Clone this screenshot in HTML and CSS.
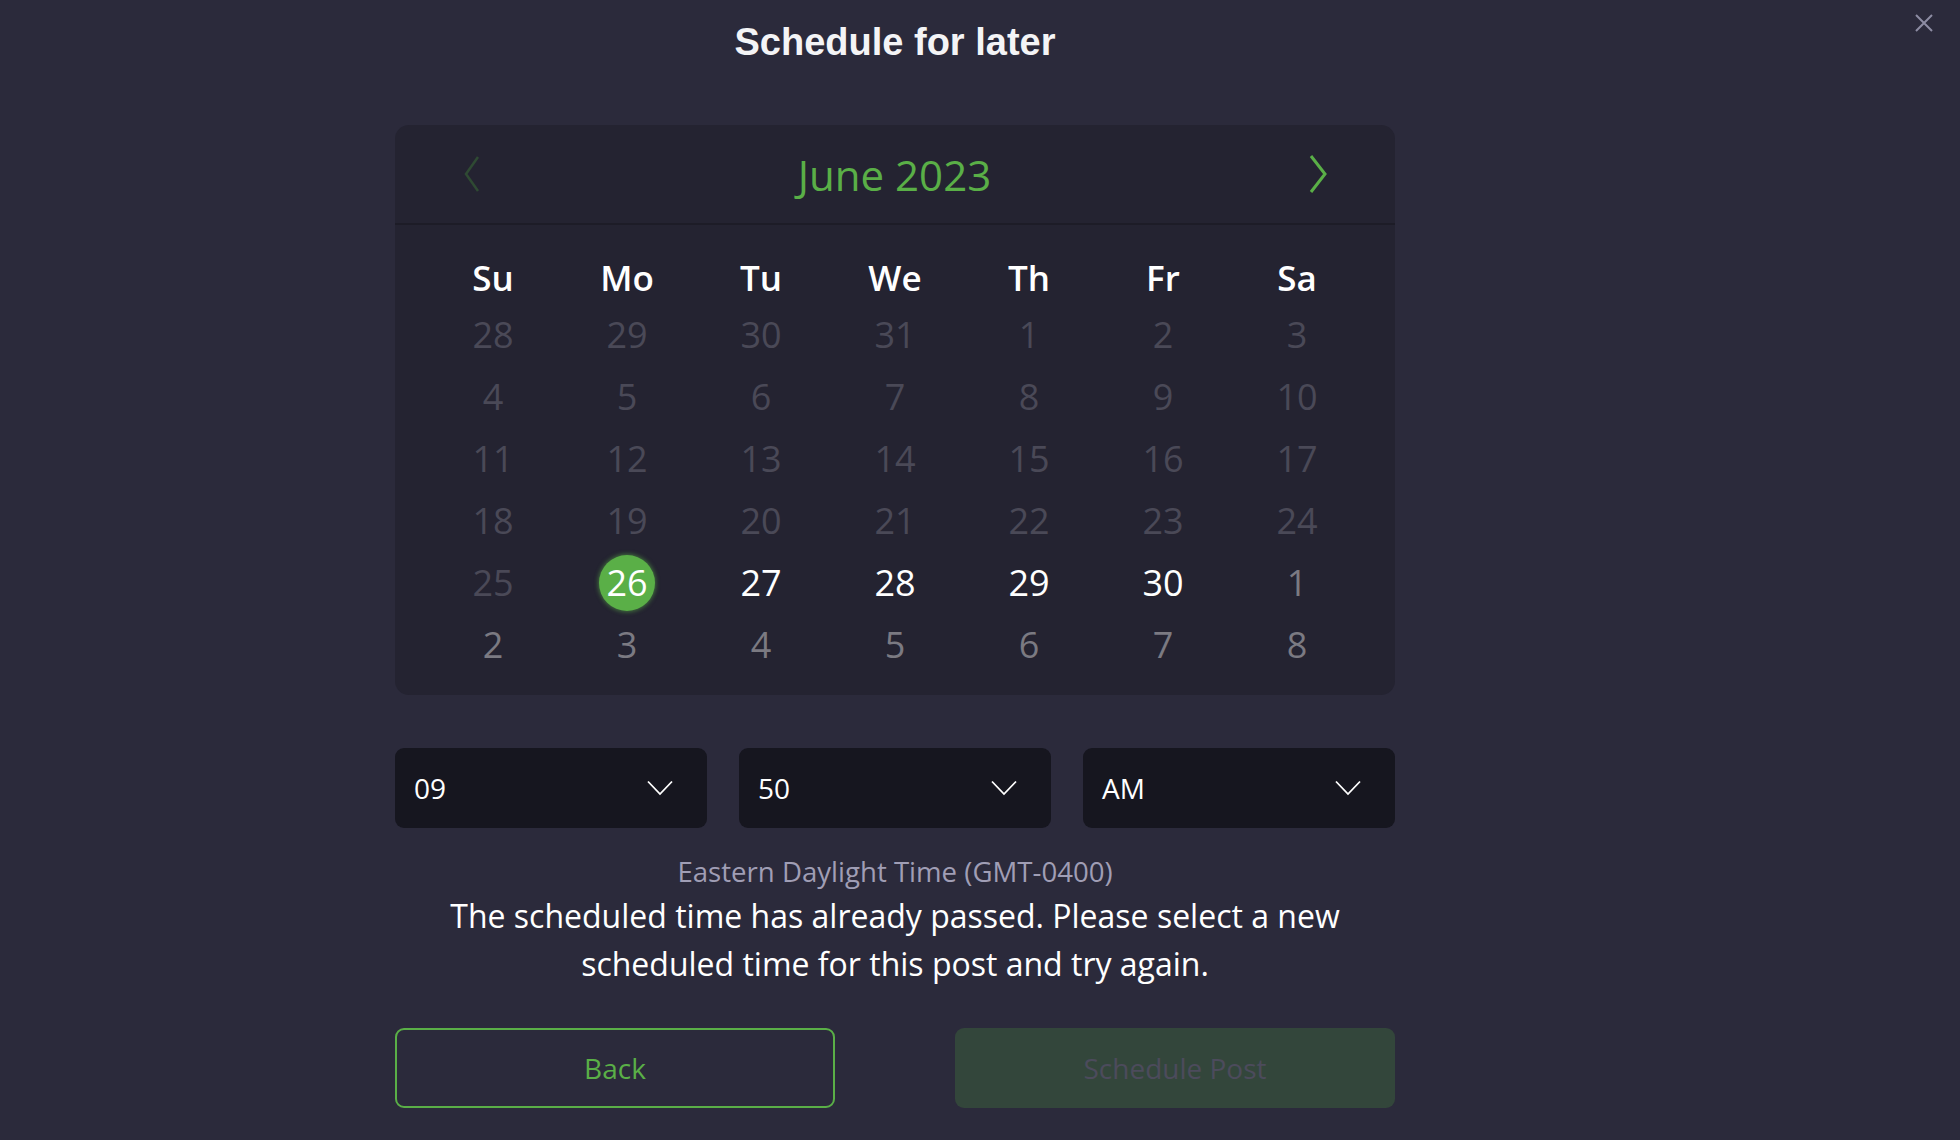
FILE: index.html
```html
<!DOCTYPE html>
<html lang="en">
<head>
    <meta charset="UTF-8">
    <title>Schedule for later</title>
    <link rel="stylesheet" href="styles.css">
</head>
<body>
    <div class="modal">
        <button class="close" aria-label="Close">
            <svg width="20" height="20" viewBox="0 0 20 20"><path d="M2 2 L18 18 M18 2 L2 18" stroke="#8d8ca3" stroke-width="2" fill="none"/></svg>
        </button>

        <div class="content">
            <h1 class="title">Schedule for later</h1>

            <section class="calendar">
                <div class="cal-header">
                    <button class="nav nav-prev" aria-label="Previous month">
                        <svg width="20" height="36" viewBox="0 0 20 36"><path d="M16 1 L4 18 L16 35" stroke="currentColor" stroke-width="2.5" fill="none"/></svg>
                    </button>
                    <span class="month">June 2023</span>
                    <button class="nav nav-next" aria-label="Next month">
                        <svg width="22" height="38" viewBox="0 0 22 38"><path d="M4 1 L18 19 L4 37" stroke="currentColor" stroke-width="3" fill="none"/></svg>
                    </button>
                </div>
                <div class="cal-grid">
                    <span class="wd">Su</span><span class="wd">Mo</span><span class="wd">Tu</span><span class="wd">We</span><span class="wd">Th</span><span class="wd">Fr</span><span class="wd">Sa</span>

                    <span class="day past">28</span><span class="day past">29</span><span class="day past">30</span><span class="day past">31</span><span class="day past">1</span><span class="day past">2</span><span class="day past">3</span>
                    <span class="day past">4</span><span class="day past">5</span><span class="day past">6</span><span class="day past">7</span><span class="day past">8</span><span class="day past">9</span><span class="day past">10</span>
                    <span class="day past">11</span><span class="day past">12</span><span class="day past">13</span><span class="day past">14</span><span class="day past">15</span><span class="day past">16</span><span class="day past">17</span>
                    <span class="day past">18</span><span class="day past">19</span><span class="day past">20</span><span class="day past">21</span><span class="day past">22</span><span class="day past">23</span><span class="day past">24</span>
                    <span class="day past">25</span><span class="day selected"><span class="dot">26</span></span><span class="day">27</span><span class="day">28</span><span class="day">29</span><span class="day">30</span><span class="day other">1</span>
                    <span class="day other">2</span><span class="day other">3</span><span class="day other">4</span><span class="day other">5</span><span class="day other">6</span><span class="day other">7</span><span class="day other">8</span>
                </div>
            </section>

            <div class="time-row">
                <div class="select"><span>09</span>
                    <svg width="26" height="16" viewBox="0 0 26 16"><path d="M1 1.5 L13 14 L25 1.5" stroke="#fff" stroke-width="1.8" fill="none"/></svg>
                </div>
                <div class="select"><span>50</span>
                    <svg width="26" height="16" viewBox="0 0 26 16"><path d="M1 1.5 L13 14 L25 1.5" stroke="#fff" stroke-width="1.8" fill="none"/></svg>
                </div>
                <div class="select"><span>AM</span>
                    <svg width="26" height="16" viewBox="0 0 26 16"><path d="M1 1.5 L13 14 L25 1.5" stroke="#fff" stroke-width="1.8" fill="none"/></svg>
                </div>
            </div>

            <p class="tz">Eastern Daylight Time (GMT-0400)</p>
            <p class="msg">The scheduled time has already passed. Please select a new scheduled time for this post and try again.</p>

            <div class="actions">
                <button class="btn btn-back">Back</button>
                <button class="btn btn-submit" disabled>Schedule Post</button>
            </div>
        </div>
    </div>
</body>
</html>
```

FILE: styles.css
```css
body {
    margin: 0;
    padding: 0;
    background-color: #2b2a3b;
    color: #fff;
    font-family: 'Open Sans', sans-serif;
    height: 1140px;
    overflow: hidden;
}

.modal {
    position: relative;
    height: 100%;
}

.close {
    position: absolute;
    top: 13px;
    left: 1914px;
    padding: 0;
    border: none;
    background: none;
    line-height: 0;
    cursor: pointer;
}

.content {
    width: 1000px;
    margin-left: 395px;
}

.title {
    margin: 0;
    padding-top: 19px;
    font-family: 'Liberation Sans', Arial, sans-serif;
    font-weight: 700;
    font-size: 38px;
    line-height: 46px;
    text-align: center;
    color: #f4f4f6;
}

/* calendar */
.calendar {
    margin-top: 60px;
    background-color: #242331;
    border-radius: 14px;
    height: 570px;
    box-sizing: border-box;
}

.cal-header {
    height: 98px;
    border-bottom: 2px solid #1d1c27;
    display: flex;
    align-items: center;
    justify-content: space-between;
    padding: 0 66px 0 67px;
}

.nav {
    padding: 0;
    border: none;
    background: none;
    line-height: 0;
    cursor: pointer;
}

.nav-prev {
    color: #2f4a33;
}

.nav-next {
    color: #5aaf47;
}

.month {
    font-size: 42px;
    color: #5aaf47;
}

.cal-grid {
    display: grid;
    grid-template-columns: repeat(7, 1fr);
    grid-template-rows: 52px repeat(6, 62px);
    padding: 27px 31px 0;
    text-align: center;
}

.wd {
    font-size: 35px;
    font-weight: 600;
    line-height: 52px;
    color: #fff;
}

.day {
    font-size: 36px;
    line-height: 62px;
    color: #fff;
    display: flex;
    align-items: center;
    justify-content: center;
}

.day.past {
    color: #4a4957;
}

.day.other {
    color: #7b7a82;
}

.dot {
    width: 56px;
    height: 56px;
    border-radius: 50%;
    background-color: #5aaf47;
    box-shadow: 0 0 4px 1px rgba(90, 175, 71, 0.55);
    display: flex;
    align-items: center;
    justify-content: center;
    line-height: 1;
}

/* time pickers */
.time-row {
    margin-top: 53px;
    display: flex;
    gap: 32px;
}

.select {
    flex: 1;
    height: 80px;
    background-color: #16161f;
    border-radius: 9px;
    display: flex;
    align-items: center;
    justify-content: space-between;
    padding: 0 34px 0 19px;
    font-size: 28px;
}

.tz {
    margin: 24px 0 0;
    text-align: center;
    font-size: 27.6px;
    color: #a09eb5;
}

.msg {
    margin: 2px 0 0;
    text-align: center;
    font-size: 32px;
    line-height: 48px;
    color: #fff;
    padding: 0 30px;
}

.actions {
    margin-top: 40px;
    display: flex;
    justify-content: space-between;
}

.btn {
    width: 440px;
    height: 80px;
    border-radius: 9px;
    font-family: 'Open Sans', sans-serif;
    font-size: 28px;
    cursor: pointer;
}

.btn-back {
    background: none;
    border: 2px solid #5aaf47;
    color: #5aaf47;
}

.btn-submit {
    background-color: #33463b;
    border: none;
    color: #4c4b5c;
}
```
